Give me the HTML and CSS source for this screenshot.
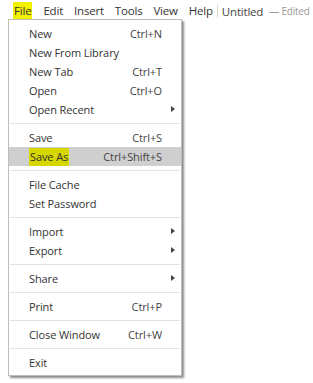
FILE: index.html
```html
<!DOCTYPE html>
<html>
<head>
<meta charset="utf-8">
<link rel="stylesheet" href="styles.css">
</head>
<body>
<div class="menubar">
  <span class="mitem active"><span class="mark">File</span></span>
  <span class="mitem">Edit</span>
  <span class="mitem">Insert</span>
  <span class="mitem">Tools</span>
  <span class="mitem">View</span>
  <span class="mitem">Help</span>
  <span class="divider"></span>
  <span class="title">Untitled</span>
  <span class="status">— Edited</span>
</div>
<div class="menu">
  <div class="row"><span class="label">New</span><span class="key">Ctrl+N</span></div>
  <div class="row"><span class="label">New From Library</span></div>
  <div class="row"><span class="label">New Tab</span><span class="key">Ctrl+T</span></div>
  <div class="row"><span class="label">Open</span><span class="key">Ctrl+O</span></div>
  <div class="row"><span class="label">Open Recent</span><span class="arrow"></span></div>
  <div class="sep"></div>
  <div class="row"><span class="label">Save</span><span class="key">Ctrl+S</span></div>
  <div class="row selected"><span class="label"><span class="mark2">Save As</span></span><span class="key">Ctrl+Shift+S</span></div>
  <div class="sep"></div>
  <div class="row"><span class="label">File Cache</span></div>
  <div class="row"><span class="label">Set Password</span></div>
  <div class="sep"></div>
  <div class="row"><span class="label">Import</span><span class="arrow"></span></div>
  <div class="row"><span class="label">Export</span><span class="arrow"></span></div>
  <div class="sep"></div>
  <div class="row"><span class="label">Share</span><span class="arrow"></span></div>
  <div class="sep"></div>
  <div class="row"><span class="label">Print</span><span class="key">Ctrl+P</span></div>
  <div class="sep"></div>
  <div class="row"><span class="label">Close Window</span><span class="key">Ctrl+W</span></div>
  <div class="sep"></div>
  <div class="row"><span class="label">Exit</span></div>
</div>
</body>
</html>
```
FILE: styles.css
```css
html, body {
  margin: 0;
  padding: 0;
  background: #fff;
  font-family: "Open Sans", "Noto Sans", sans-serif;
  color: #333;
}
body {
  position: relative;
  width: 313px;
  height: 383px;
  overflow: hidden;
}
.menubar {
  display: flex;
  align-items: center;
  height: 22px;
  padding-left: 14px;
  font-size: 11.5px;
  letter-spacing: -0.2px;
  color: #333;
  white-space: nowrap;
}
.mitem {
  margin-right: 11px;
  line-height: 14px;
}
.mark {
  background: #f2f200;
  padding: 1px 1px 2px;
  margin-left: -1px;
}
.divider {
  width: 1px;
  height: 14px;
  background: #ddd;
  margin: 0 4px 0 -7px;
}
.title {
  color: #444;
}
.status {
  margin-left: 6px;
  font-size: 10px;
  color: #999;
}
.menu {
  position: absolute;
  left: 8px;
  top: 19px;
  width: 172px;
  background: #fff;
  border: 1px solid #bdbdbd;
  box-shadow: 2px 2px 2px rgba(0,0,0,0.45);
  padding: 4px 0 3px;
  font-size: 11px;
  letter-spacing: -0.1px;
  color: #333;
}
.row {
  position: relative;
  display: flex;
  align-items: center;
  height: 19px;
  padding-left: 20px;
  padding-right: 19px;
}
.row .label {
  flex: 1;
}
.row .key {
  color: #444;
}
.row.selected {
  background: #cfcfcf;
}
.mark2 {
  background: #d6d600;
  padding: 1px 1px 2px;
}
.arrow {
  position: absolute;
  right: 6px;
  top: 6px;
  width: 0;
  height: 0;
  border-top: 3px solid transparent;
  border-bottom: 3px solid transparent;
  border-left: 4px solid #444;
}
.sep {
  height: 1px;
  background: #e3e3e3;
  margin: 4px 1px 4px;
}
```
